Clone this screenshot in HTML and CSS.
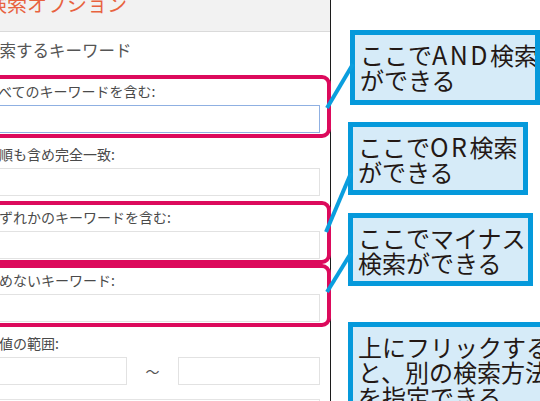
FILE: index.html
```html
<!DOCTYPE html>
<html lang="ja">
<head>
<meta charset="utf-8">
<title>検索オプション</title>
<link rel="stylesheet" href="styles.css">
</head>
<body>
<div class="page">
  <div class="phone">
    <div class="hdr"><div class="title">検索オプション</div></div>
    <div class="heading">検索するキーワード</div>
    <div class="field hl">
      <div class="label">すべてのキーワードを含む:</div>
      <div class="input focus"></div>
    </div>
    <div class="field">
      <div class="label">語順も含め完全一致:</div>
      <div class="input"></div>
    </div>
    <div class="field hl">
      <div class="label">いずれかのキーワードを含む:</div>
      <div class="input"></div>
    </div>
    <div class="field hl">
      <div class="label">含めないキーワード:</div>
      <div class="input"></div>
    </div>
    <div class="field">
      <div class="label">数値の範囲:</div>
      <div class="range">
        <div class="input"></div>
        <div class="tilde">〜</div>
        <div class="input"></div>
      </div>
    </div>
    <div class="next"></div>
  </div>
  <div class="notes">
    <div class="note n1">ここで<span class="lat">AND</span>検索<br>ができる</div>
    <div class="note n2">ここで<span class="lat">OR</span>検索<br>ができる</div>
    <div class="note n3">ここでマイナス<br>検索ができる</div>
    <div class="note n4">上にフリックする<br>と、別の検索方法<br>を指定できる</div>
  </div>
  <svg class="links" width="540" height="401" viewBox="0 0 540 401">
    <line x1="327" y1="108" x2="353" y2="64"/>
    <line x1="326" y1="232" x2="351" y2="173"/>
    <line x1="327" y1="292" x2="351" y2="253"/>
  </svg>
</div>
</body>
</html>
```
FILE: styles.css
```css
html, body {
  margin: 0;
  padding: 0;
  background: #fff;
}
body {
  font-family: "Noto Sans CJK JP", "Noto Sans", sans-serif;
}
.page {
  position: relative;
  width: 540px;
  height: 401px;
  overflow: hidden;
  display: flex;
  align-items: flex-start;
}
.phone {
  flex: none;
  width: 350px;
  height: 401px;
  margin-left: -20px;
  border-right: 1px solid #1c1c1c;
  background: #fff;
  position: relative;
}
.hdr {
  display: flow-root;
  height: 31px;
  background: #f2f2f2;
  border-bottom: 1px solid #dadada;
  padding-left: 7px;
}
.title {
  margin-top: -6px;
  font-size: 20px;
  line-height: 20px;
  color: #e8623f;
  white-space: nowrap;
}
.heading {
  margin-top: 8px;
  padding-left: 3px;
  font-size: 16.5px;
  line-height: 20px;
  color: #555;
  white-space: nowrap;
}
.field {
  position: relative;
  padding: 6px 10px 5px 5px;
}
.heading + .field {
  margin-top: 15px;
}
.field.hl::after {
  content: "";
  position: absolute;
  left: -10px;
  right: -1px;
  top: 0;
  bottom: 0;
  border: 4px solid #dc0a5c;
  border-radius: 9px;
  z-index: 2;
}
.label {
  font-size: 14px;
  line-height: 20px;
  height: 20px;
  color: #4a4a4a;
  white-space: nowrap;
  margin-bottom: 4px;
}
.input {
  height: 26px;
  border: 1px solid #e2e2e2;
  background: #fff;
}
.input.focus {
  border-color: #8fb0e2;
}
.range {
  display: grid;
  grid-template-columns: 1fr 51px 1fr;
  align-items: center;
}
.tilde {
  text-align: center;
  font-size: 14px;
  color: #555;
}
.next {
  margin: 9px 10px 0 5px;
  height: 30px;
  border: 1px solid #e4e4e4;
}
.notes {
  flex: none;
  display: flex;
  flex-direction: column;
  align-items: flex-start;
  padding-left: 17px;
}
.note {
  box-sizing: border-box;
  border: 5px solid #0599db;
  background: #d6ebf8;
  color: #231815;
  font-size: 24px;
  line-height: 25px;
  white-space: nowrap;
  padding: 7px 0 9px 5px;
  overflow: hidden;
}
.lat {
  font-size: 25px;
  letter-spacing: 2.5px;
}
.n1 {
  margin-top: 30px;
  margin-left: 2px;
  width: 190px;
  height: 75px;
  padding-left: 5px;
}
.n2 {
  margin-top: 17px;
  width: 180px;
  height: 73px;
}
.n3 {
  margin-top: 18px;
  width: 185px;
  height: 73px;
}
.n4 {
  margin-top: 36px;
  width: 230px;
  height: 110px;
}
.links {
  position: absolute;
  left: 0;
  top: 0;
  pointer-events: none;
  z-index: 3;
}
.links line {
  stroke: #0a9ede;
  stroke-width: 4;
}
```
